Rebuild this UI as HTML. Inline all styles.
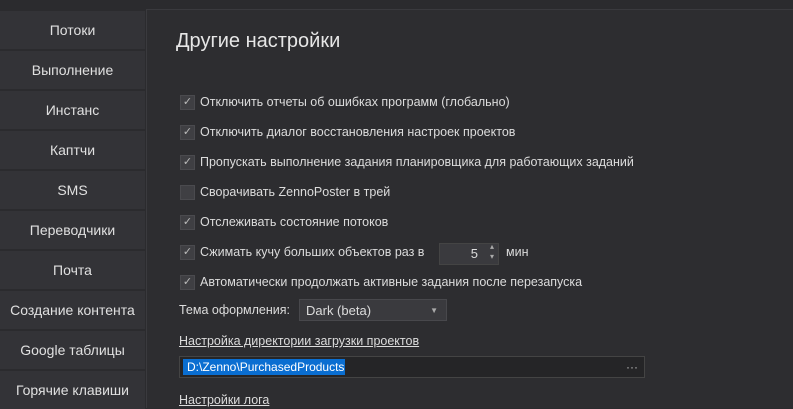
<html><head><style>
body{margin:0;width:793px;height:407px;background:#2b2b2e;font-family:"Liberation Sans","DejaVu Sans",sans-serif;color:#dcdcdc;overflow:hidden;position:relative}
.sb{position:absolute;left:0;width:145px;height:38px;background:#333337;text-align:center;line-height:38px;font-size:14px;color:#e0e0e0}
.main{position:absolute;left:146px;top:9px;width:647px;height:398px;background:#2d2d30;border-left:1px solid #3a3a3e;border-top:1px solid #3a3a3e}
h1{position:absolute;left:29px;top:20px;margin:0;font-size:20px;font-weight:normal;color:#e6e6e6}
.row{position:absolute;left:33px;font-size:12.5px;height:16px;line-height:16px;display:flex;align-items:center;white-space:nowrap}
.cb{display:inline-block;width:13px;height:13px;background:#3f3f43;border:1px solid #4a4a4e;margin-right:5px;font-size:11px;line-height:13px;text-align:center;color:#bbb;flex:none}
a{color:#dcdcdc;text-decoration:underline}
</style></head><body>
<div class="sb" style="top:11px">Потоки</div>
<div class="sb" style="top:51px">Выполнение</div>
<div class="sb" style="top:91px">Инстанс</div>
<div class="sb" style="top:131px">Каптчи</div>
<div class="sb" style="top:171px">SMS</div>
<div class="sb" style="top:211px">Переводчики</div>
<div class="sb" style="top:251px">Почта</div>
<div class="sb" style="top:291px">Создание контента</div>
<div class="sb" style="top:331px">Google таблицы</div>
<div class="sb" style="top:371px">Горячие клавиши</div>
<div class="main">
<h1>Другие настройки</h1>
<div class="row" style="top:84px"><span class="cb">✓</span>Отключить отчеты об ошибках программ (глобально)</div>
<div class="row" style="top:114px"><span class="cb">✓</span>Отключить диалог восстановления настроек проектов</div>
<div class="row" style="top:144px"><span class="cb">✓</span>Пропускать выполнение задания планировщика для работающих заданий</div>
<div class="row" style="top:174px"><span class="cb"></span>Сворачивать ZennoPoster в трей</div>
<div class="row" style="top:204px"><span class="cb">✓</span>Отслеживать состояние потоков</div>
<div class="row" style="top:234px"><span class="cb">✓</span>Сжимать кучу больших объектов раз в</div>
<div style="position:absolute;left:292px;top:233px;width:58px;height:20px;background:#3a3a3e;border:1px solid #444;font-size:13px;line-height:20px;color:#ddd"><span style="position:absolute;right:20px">5</span><span style="position:absolute;right:4px;top:-2px;font-size:8px;line-height:10px;color:#aaa">▴<br>▾</span></div>
<div class="row" style="top:234px;left:359px">мин</div>
<div class="row" style="top:264px"><span class="cb">✓</span>Автоматически продолжать активные задания после перезапуска</div>
<div class="row" style="top:292px;left:32px">Тема оформления:</div>
<div style="position:absolute;left:152px;top:289px;width:148px;height:22px;background:#3a3a3e;border:1px solid #48484c;font-size:13px;line-height:22px;padding-left:6px;box-sizing:border-box">Dark (beta)<span style="position:absolute;right:8px;font-size:8px;color:#aaa">▼</span></div>
<div class="row" style="top:323px;left:32px"><a>Настройка директории загрузки проектов</a></div>
<div style="position:absolute;left:32px;top:346px;width:464px;height:20px;background:#252527;border:1px solid #444;font-size:12px;line-height:20px"><span style="background:#0a6ed1;color:#fff;padding:1px 1px 1px 4px;margin-left:3px">D:\Zenno\PurchasedProducts</span><span style="position:absolute;right:6px;color:#bbb">···</span></div>
<div class="row" style="top:382px;left:32px"><a>Настройки лога</a></div>
</div>
</body></html>
